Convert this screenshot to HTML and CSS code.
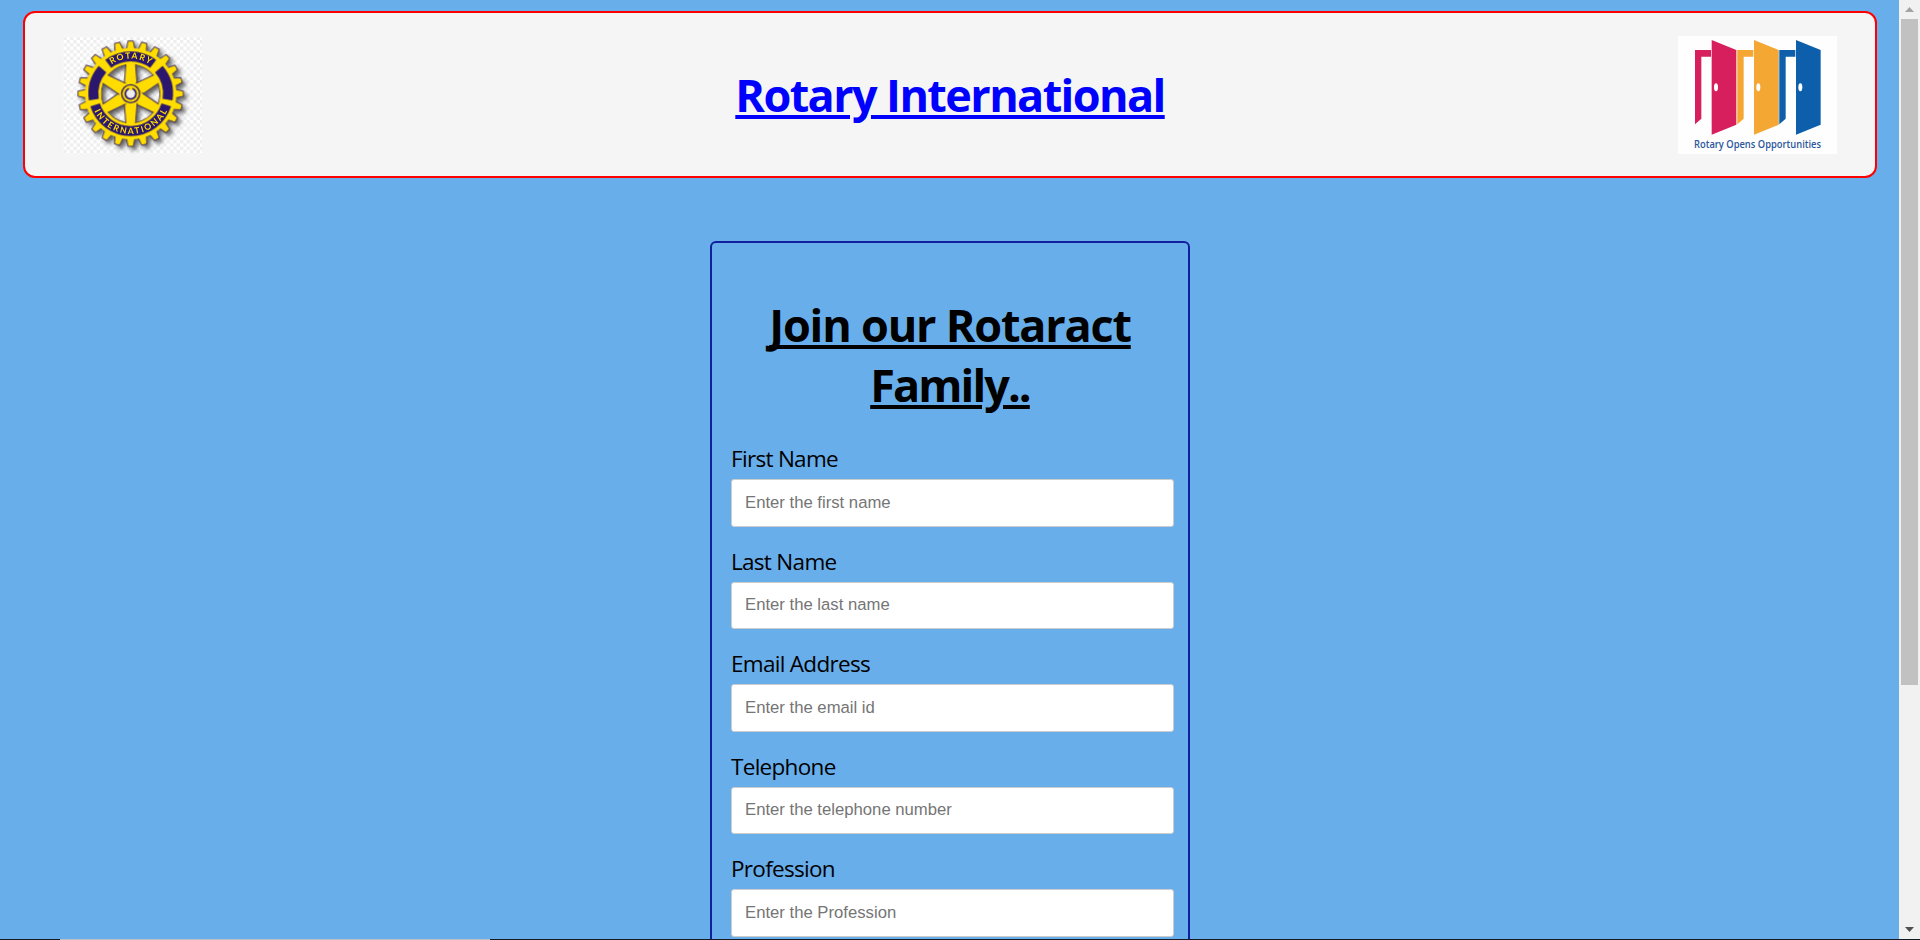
FILE: index.html
```html
<!DOCTYPE html>
<html lang="en">
<head>
<meta charset="utf-8">
<title>Rotary International</title>
<link rel="stylesheet" href="styles.css">
</head>
<body>
<div class="window">
  <main class="page">
    <header class="banner">
      <svg class="wheel" viewBox="189 108 417 354" role="img" aria-label="Rotary wheel">
        <defs>
          <pattern id="check" width="20" height="20" patternUnits="userSpaceOnUse">
            <path fill="#fff" d="M0 0h20v20H0z"/><path fill="#eee" d="M0 0h10v10H0zM10 10h10v10H10z"/>
          </pattern>
          <path id="tooth" d="M375 170L384 123H400L409 170Z"/>
          <g id="teeth4"><use href="#tooth"/><use href="#tooth" transform="rotate(15 392 281)"/><use href="#tooth" transform="rotate(30 392 281)"/><use href="#tooth" transform="rotate(45 392 281)"/></g>
          <path id="spoke" d="M378 186H406L412 262H372Z"/>
          <path id="top-text" d="M287 281A105 105 0 0 1 497 281"/>
          <path id="low-text" d="M271 281A121 121 0 0 0 513 281"/>
        </defs>
        <path fill="url(#check)" d="M189 108h417v354H189z"/>
        <g class="gear">
          <g fill="#fd0" stroke="#49345c" stroke-width="3" stroke-linejoin="round">
            <use href="#teeth4"/><use href="#teeth4" transform="rotate(60 392 281)"/><use href="#teeth4" transform="rotate(120 392 281)"/><use href="#teeth4" transform="rotate(180 392 281)"/><use href="#teeth4" transform="rotate(240 392 281)"/><use href="#teeth4" transform="rotate(300 392 281)"/>
            <circle cx="392" cy="281" r="112" fill="none" stroke="#fd0" stroke-width="50"/>
            <circle cx="392" cy="281" r="88" fill="none" stroke-width="3"/>
            <g stroke-width="3">
              <use href="#spoke"/><use href="#spoke" transform="rotate(60 392 281)"/><use href="#spoke" transform="rotate(120 392 281)"/><use href="#spoke" transform="rotate(180 392 281)"/><use href="#spoke" transform="rotate(240 392 281)"/><use href="#spoke" transform="rotate(300 392 281)"/>
            </g>
            <circle cx="392" cy="281" r="94" fill="none" stroke="#fd0" stroke-width="9"/>
          </g>
          <circle cx="392" cy="281" r="34" fill="#fd0"/>
          <circle cx="392" cy="281" r="27" fill="none" stroke="#2b176e" stroke-width="4"/>
          <circle cx="392" cy="281" r="16" fill="#eee" stroke="#2b176e" stroke-width="5"/>
          <path fill="#fd0" d="M387 261h10v9h-10z"/>
          <path fill="none" stroke="#2b176e" stroke-width="30" d="M324.600 191.600A112 112 0 0 1 459.400 191.600M476.500 207.500A112 112 0 0 1 502.600 298.500M307.500 207.500A112 112 0 0 0 281.400 298.500M498.800 314.700A112 112 0 0 1 285.200 314.700"/>
        </g>
        <g class="wheel-text">
          <text><textPath href="#top-text" startOffset="50%" textLength="122">ROTARY</textPath></text>
          <text><textPath href="#low-text" startOffset="50%" textLength="272">INTERNATIONAL</textPath></text>
        </g>
      </svg>
      <h1 class="title brand">Rotary International</h1>
      <svg class="doors" viewBox="54 108 477 354" role="img" aria-label="Rotary Opens Opportunities">
        <defs>
          <g id="door">
            <path d="M105 150H153V170H124V356L105 373Z"/>
            <path d="M155 120L229 150V374L155 404Z"/>
            <ellipse cx="168" cy="262" rx="6" ry="12" fill="#fff"/>
          </g>
        </defs>
        <path fill="#fefefe" d="M54 108h477v354H54z"/>
        <use href="#door" fill="#d81f5e"/>
        <path fill="#f3b6a8" d="M228 151h4v222h-4z"/>
        <use href="#door" x="127" fill="#f5a733"/>
        <path fill="#b9b49b" d="M355 151h3v222h-3z"/>
        <use href="#door" x="253" fill="#0d5fab"/>
        <text class="doors-text" x="102" y="444" textLength="381" lengthAdjust="spacingAndGlyphs">Rotary Opens Opportunities</text>
      </svg>
    </header>
    <form class="card">
      <h2 class="title"><span class="initial">J</span>oin our Rotaract <span class="tight">Family..</span></h2>
      <div class="field"><label for="first">First Name</label><input id="first" type="text" placeholder="Enter the first name"></div>
      <div class="field"><label for="last">Last Name</label><input id="last" type="text" placeholder="Enter the last name"></div>
      <div class="field"><label for="email">Email Address</label><input id="email" type="text" placeholder="Enter the email id"></div>
      <div class="field"><label for="phone">Telephone</label><input id="phone" type="text" placeholder="Enter the telephone number"></div>
      <div class="field"><label for="job">Profession</label><input id="job" type="text" placeholder="Enter the Profession"></div>
    </form>
  </main>
  <div class="scrollbar">
    <svg class="arrow" viewBox="0 0 21 19"><path fill="#a3a3a3" d="M6 12L10.500 7L15 12Z"/></svg>
    <div class="thumb"></div>
    <svg class="arrow arrow-down" viewBox="0 0 21 19"><path fill="#505050" d="M6 7L10.500 12L15 7Z"/></svg>
  </div>
</div>
<div class="edge"><div class="edge-light"></div></div>
</body>
</html>
```
FILE: styles.css
```css
* { box-sizing: border-box; }
body { margin: 0; height: 940px; overflow: hidden; font-family: "Open Sans", "Noto Sans", sans-serif; color: #000; }
.window { display: flex; height: 939px; overflow: hidden; }
.page { flex: 1; height: 939px; overflow: hidden; padding: 11px 22px 0 23px; background: #68aeeb; }
.banner { display: flex; align-items: center; justify-content: space-between; height: 167px; padding: 0 38px; border: 2px solid #f00; border-radius: 12px; background: #f5f5f5; }
.wheel { width: 139px; height: 118px; }
.doors { width: 159px; height: 118px; }
.gear { filter: drop-shadow(9px 9px 6px rgba(0, 0, 0, .6)); }
.wheel-text { font: bold 26px Lato, sans-serif; fill: #fd0; text-anchor: middle; }
.doors-text { font: 600 31px "Open Sans", sans-serif; fill: #2b569c; }
.title { margin: 0; font-size: 45px; line-height: 60px; font-weight: 700; letter-spacing: -1.200px; text-align: center; text-decoration: underline; text-decoration-thickness: 4px; text-underline-offset: 3px; }
.brand { margin-left: 20px; color: #00f; letter-spacing: -1.600px; }
.initial { text-decoration-skip-ink: none; }
.tight { letter-spacing: -1.900px; }
.card { width: 480px; height: 1100px; margin: 63px auto 0; padding: 52px 14px 0 19px; border: 2px solid #101f9c; border-radius: 6px; }
.card .title { margin: 0 5px 24px 0; }
.field { height: 102.500px; }
.field label { display: block; height: 40px; line-height: 30px; padding-top: 5px; font-size: 22.500px; letter-spacing: -.700px; }
.field input { display: block; width: 443px; height: 47.500px; padding: 0 13px; border: 1px solid #ccc; border-radius: 3px; background: #fff; font: 16.700px "Liberation Sans", Arial, sans-serif; }
.field input::placeholder { color: #757575; }
.scrollbar { display: flex; flex-direction: column; width: 21px; background: #f1f1f1; }
.arrow { width: 21px; height: 19px; }
.thumb { width: 17px; height: 666px; margin-left: 2px; background: #c1c1c1; }
.arrow-down { margin-top: auto; }
.edge { height: 1px; padding-left: 60px; background: #151b22; }
.edge-light { width: 430px; height: 1px; background: #b9c0c6; }
```
